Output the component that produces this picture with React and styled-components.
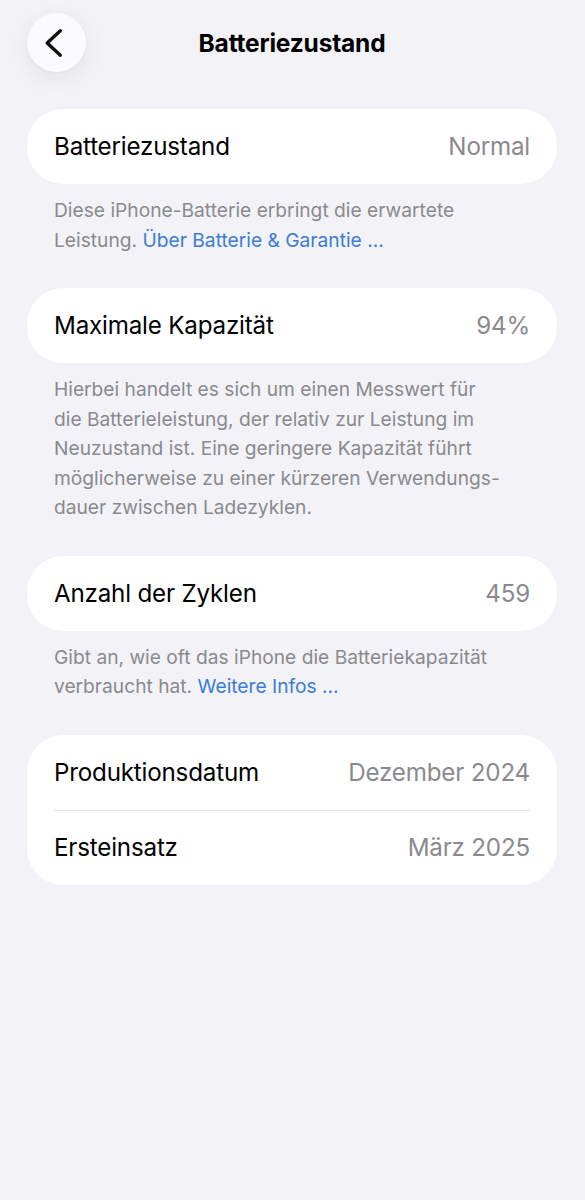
import React from 'react'
import styled, { createGlobalStyle } from 'styled-components'

const GlobalStyle = createGlobalStyle`
  * { box-sizing: border-box; }
  html, body {
    margin: 0;
    padding: 0;
    background: #f2f2f7;
  }
  body {
    font-family: Inter, "Noto Sans", "Liberation Sans", sans-serif;
    -webkit-font-smoothing: antialiased;
  }
`

const Page = styled.div`
  min-height: 1200px;
  background: #f2f2f7;
  padding: 13px 28px 0 27px;
`

const NavBar = styled.div`
  position: relative;
  display: flex;
  align-items: center;
  justify-content: center;
  height: 59px;
  margin-bottom: 37px;
`

const BackButton = styled.button`
  position: absolute;
  left: 0;
  top: 0;
  width: 59px;
  height: 59px;
  border: none;
  border-radius: 50%;
  background: #fbfbfd;
  box-shadow: 0 6px 22px rgba(0, 0, 0, 0.07), 0 1px 3px rgba(0, 0, 0, 0.03);
  display: flex;
  align-items: center;
  justify-content: center;
  padding: 0;
  cursor: pointer;

  svg {
    margin-right: 6px;
  }
`

const Title = styled.h1`
  margin: 0;
  font-size: 24.5px;
  font-weight: 700;
  color: #000;
  letter-spacing: -0.2px;
`

const Card = styled.div`
  background: #fff;
  border-radius: 36px;
  padding: 0 27px;
`

const Row = styled.div`
  display: flex;
  align-items: center;
  justify-content: space-between;
  height: 75px;
  border-top: ${p => (p.$divider ? '1px solid #e3e3e7' : 'none')};
`

const Label = styled.span`
  font-size: 24.2px;
  color: #000;
  letter-spacing: -0.2px;
`

const Value = styled.span`
  font-size: 24.2px;
  color: #8a8a8e;
  letter-spacing: -0.2px;
`

const Footer = styled.p`
  margin: 0;
  padding: 12px 10px 33px 27px;
  font-size: 19.2px;
  line-height: 29.5px;
  color: #8a8a8e;
  white-space: nowrap;
`

const Link = styled.a`
  color: #3b7dd3;
  text-decoration: none;
`

const Chevron = () => (
  <svg width="20" height="30" viewBox="0 0 20 30" fill="none">
    <path
      d="M16.3 2.8 L3.2 15 L16.3 27.2"
      stroke="#111"
      strokeWidth="3.4"
      strokeLinecap="round"
      strokeLinejoin="round"
    />
  </svg>
)

const App = () => {
  return (
    <>
      <GlobalStyle />
      <Page>
        <NavBar>
          <BackButton aria-label="Zurück">
            <Chevron />
          </BackButton>
          <Title>Batteriezustand</Title>
        </NavBar>

        <Card>
          <Row>
            <Label>Batteriezustand</Label>
            <Value>Normal</Value>
          </Row>
        </Card>
        <Footer>
          Diese iPhone-Batterie erbringt die erwartete
          <br />
          Leistung. <Link href="#">Über Batterie &amp; Garantie …</Link>
        </Footer>

        <Card>
          <Row>
            <Label>Maximale Kapazität</Label>
            <Value>94%</Value>
          </Row>
        </Card>
        <Footer>
          Hierbei handelt es sich um einen Messwert für
          <br />
          die Batterieleistung, der relativ zur Leistung im
          <br />
          Neuzustand ist. Eine geringere Kapazität führt
          <br />
          möglicherweise zu einer kürzeren Verwendungs-
          <br />
          dauer zwischen Ladezyklen.
        </Footer>

        <Card>
          <Row>
            <Label>Anzahl der Zyklen</Label>
            <Value>459</Value>
          </Row>
        </Card>
        <Footer>
          Gibt an, wie oft das iPhone die Batteriekapazität
          <br />
          verbraucht hat. <Link href="#">Weitere Infos …</Link>
        </Footer>

        <Card>
          <Row>
            <Label>Produktionsdatum</Label>
            <Value>Dezember 2024</Value>
          </Row>
          <Row $divider>
            <Label>Ersteinsatz</Label>
            <Value>März 2025</Value>
          </Row>
        </Card>
      </Page>
    </>
  )
}

export default App
